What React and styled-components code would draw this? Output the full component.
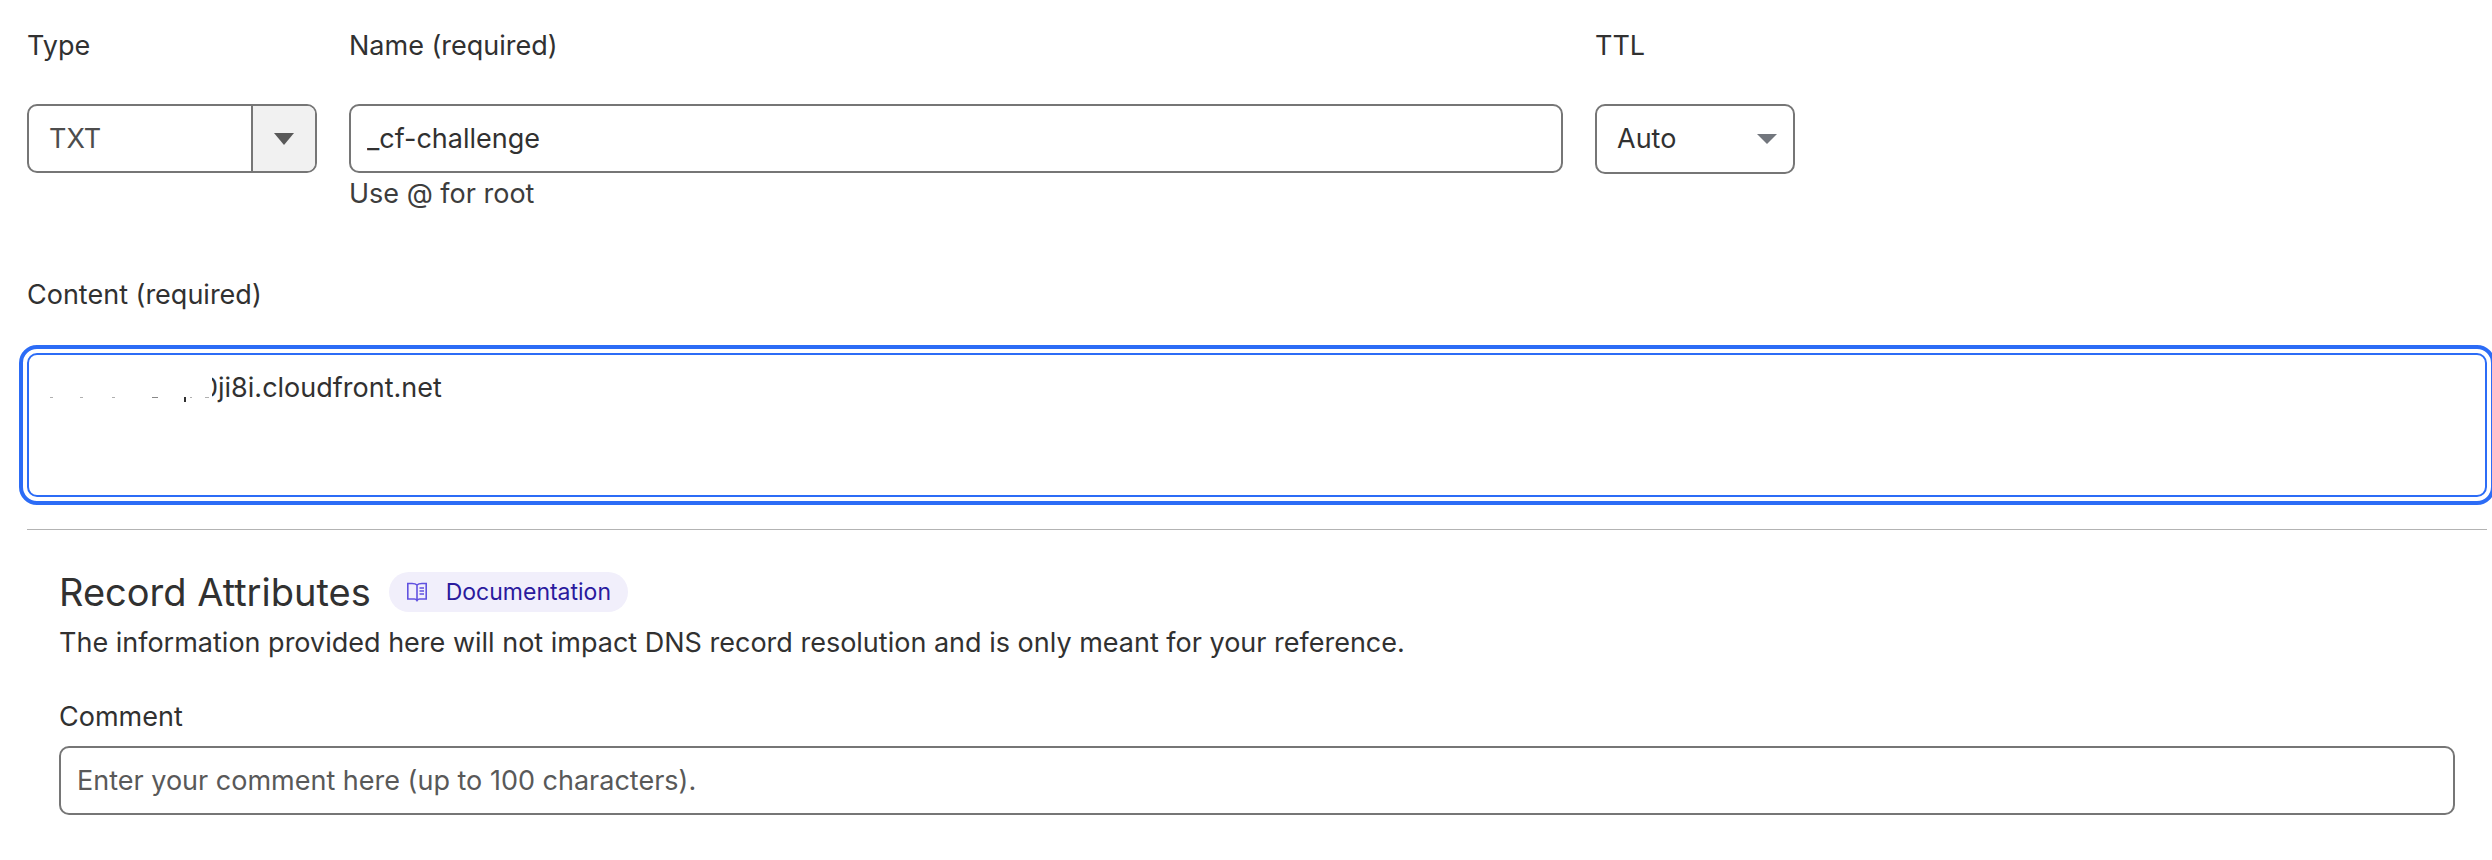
import { useState } from 'react'
import styled, { createGlobalStyle } from 'styled-components'

const GlobalStyle = createGlobalStyle`
  * {
    box-sizing: border-box;
  }

  body {
    margin: 0;
    background-color: #ffffff;
    color: #313131;
    font-family: Inter, "Liberation Sans", sans-serif;
    font-size: 27px;
    line-height: 42px;
  }
`

const App = () => {
  const [type, setType] = useState('TXT')
  const [name, setName] = useState('_cf-challenge')
  const [ttl, setTtl] = useState('Auto')
  const [content, setContent] = useState('0ji8i.cloudfront.net')
  const [comment, setComment] = useState('')

  return (
    <>
      <GlobalStyle />
      <Form>
        <FieldRow>
          <Field>
            <Label htmlFor="type">Type</Label>
            <SelectContainer>
              <TypeSelect id="type" value={type} onChange={(e) => setType(e.target.value)}>
                <option>A</option>
                <option>AAAA</option>
                <option>CNAME</option>
                <option>MX</option>
                <option>TXT</option>
              </TypeSelect>
              <TypeToggle>
                <svg width="20" height="12" viewBox="0 0 20 12">
                  <path d="M0 0h20L10 12z" fill="#595959" />
                </svg>
              </TypeToggle>
            </SelectContainer>
          </Field>
          <Field>
            <Label htmlFor="name">Name (required)</Label>
            <Input id="name" value={name} onChange={(e) => setName(e.target.value)} />
            <Hint>Use @ for root</Hint>
          </Field>
          <Field>
            <Label htmlFor="ttl">TTL</Label>
            <SelectContainer>
              <TtlSelect id="ttl" value={ttl} onChange={(e) => setTtl(e.target.value)}>
                <option>Auto</option>
                <option>1 min</option>
                <option>5 min</option>
                <option>1 hr</option>
              </TtlSelect>
              <TtlArrow width="20" height="10" viewBox="0 0 20 10">
                <path d="M0 0h20L10 10z" fill="#72767d" />
              </TtlArrow>
            </SelectContainer>
          </Field>
        </FieldRow>
        <ContentField>
          <Label htmlFor="content">Content (required)</Label>
          <ContentContainer>
            <TextArea id="content" value={content} onChange={(e) => setContent(e.target.value)} />
            <Redaction />
          </ContentContainer>
        </ContentField>
        <Attributes>
          <TitleRow>
            <Title>Record Attributes</Title>
            <DocLink href="#documentation">
              <BookIcon />
              Documentation
            </DocLink>
          </TitleRow>
          <Description>
            The information provided here will not impact DNS record resolution and is only meant for your reference.
          </Description>
          <CommentLabel htmlFor="comment">Comment</CommentLabel>
          <Input
            id="comment"
            placeholder="Enter your comment here (up to 100 characters)."
            maxLength={100}
            value={comment}
            onChange={(e) => setComment(e.target.value)}
          />
        </Attributes>
      </Form>
    </>
  )
}

const BookIcon = () => (
  <svg width="22" height="20" viewBox="0 0 22 20" fill="none" stroke="#6152e0" strokeWidth="1.6">
    <path d="M11 3C9.500 1.500 8 1.500 6 1.500H1.800V17H8.500C9.800 17 10.300 17.500 11 18.500C11.700 17.500 12.200 17 13.500 17H20.200V1.500H16C14 1.500 12.500 1.500 11 3V18" />
    <path d="M13.500 6H18M13.500 9H18M13.500 12H18" />
  </svg>
)

// covers the start of the record value, leaving the traces below the baseline
const Redaction = () => (
  <RedactionMark width="180" height="40" viewBox="0 0 180 40">
    <rect width="173" height="40" fill="#ffffff" />
    <path d="M11 28.500h3M41 28.500h3M73 28.500h3M151 28.500h2M166 28.500h4" stroke="#b0b0b0" />
    <path d="M113 28.500h6" stroke="#888888" />
    <path d="M146 28v5" stroke="#313131" strokeWidth="2" />
  </RedactionMark>
)

const Form = styled.form`
  padding: 25px 5px 44px 27px;
`

const FieldRow = styled.div`
  display: grid;
  grid-template-columns: 290px 1214fr 200px 660fr;
  gap: 32px;
`

const Field = styled.div`
  display: flex;
  flex-direction: column;
`

const Label = styled.label`
  margin-bottom: 37px;
`

const Input = styled.input`
  width: 100%;
  height: 69px;
  padding: 0 16px;
  border: 2px solid #767676;
  border-radius: 10px;
  background-color: #ffffff;
  color: #313131;
  font: inherit;

  &::placeholder {
    color: #595959;
    opacity: 1;
  }
`

const Hint = styled.div`
  color: #3d3d3d;
`

const SelectContainer = styled.div`
  position: relative;
`

const Select = styled.select`
  display: block;
  width: 100%;
  padding: 0 20px;
  border: 2px solid #767676;
  border-radius: 10px;
  background-color: #ffffff;
  font: inherit;
  appearance: none;
`

const TypeSelect = styled(Select)`
  height: 69px;
  color: #4d4d4d;
`

const TtlSelect = styled(Select)`
  height: 70px;
  color: #313131;
`

const TypeToggle = styled.div`
  position: absolute;
  top: 2px;
  right: 2px;
  bottom: 2px;
  width: 64px;
  display: flex;
  align-items: center;
  justify-content: center;
  border-left: 2px solid #767676;
  border-radius: 0 8px 8px 0;
  background-color: #f1f1f1;
  pointer-events: none;
`

const TtlArrow = styled.svg`
  position: absolute;
  top: 30px;
  right: 18px;
  pointer-events: none;
`

const ContentField = styled.div`
  display: flex;
  flex-direction: column;
  margin-top: 59px;
  padding-bottom: 32px;
  border-bottom: 1px solid #b3b3b3;
`

const ContentContainer = styled.div`
  position: relative;
`

const TextArea = styled.textarea`
  display: block;
  width: 100%;
  height: 144px;
  padding: 12px 20px 12px 172px;
  border: 2px solid #2c6cf6;
  border-radius: 10px;
  outline: 4px solid #2c6cf6;
  outline-offset: 4px;
  background-color: #ffffff;
  color: #313131;
  font: inherit;
  resize: none;
`

const RedactionMark = styled.svg`
  position: absolute;
  top: 16px;
  left: 12px;
  pointer-events: none;
`

const Attributes = styled.section`
  padding: 32px 32px 0;
`

const TitleRow = styled.div`
  display: flex;
  align-items: center;
  gap: 18px;
`

const Title = styled.h2`
  margin: 0;
  font-size: 38px;
  line-height: 60px;
  font-weight: 400;
`

const DocLink = styled.a`
  display: flex;
  align-items: center;
  gap: 18px;
  height: 40px;
  padding: 0 17px;
  border-radius: 20px;
  background-color: #f1effb;
  color: #2a1a9e;
  font-size: 23px;
  line-height: 36px;
  text-decoration: none;
`

const Description = styled.p`
  margin: 0;
`

const CommentLabel = styled.label`
  display: block;
  margin-top: 32px;
  margin-bottom: 8px;
`

export default App
